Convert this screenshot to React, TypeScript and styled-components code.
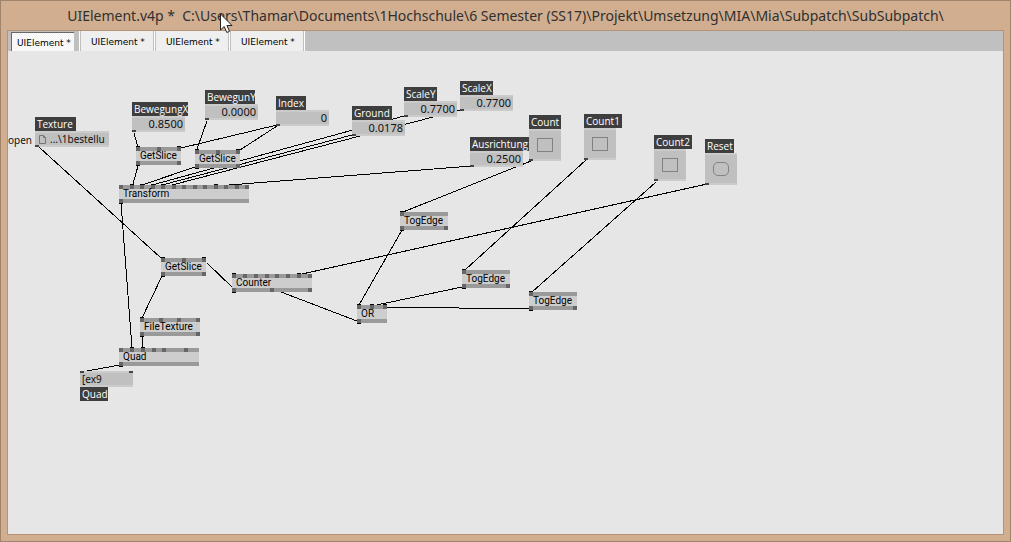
import React from "react";
import styled, { createGlobalStyle, css } from "styled-components";

const GlobalStyle = createGlobalStyle`
  *, *::before, *::after { box-sizing: border-box; }
  body { margin: 0; background: #d1ae8f; }
  button, input { font: inherit; color: inherit; margin: 0; padding: 0; border: 0; }
`;

const ioFont = `"Noto Sans", "Open Sans", sans-serif`;

const Window = styled.div`
  display: flex;
  flex-direction: column;
  min-height: 100vh;
  padding: 0 6px 6px;
  border: 1px solid #a0836b;
  background: #d1ae8f;
`;

const TitleBar = styled.h1`
  display: flex;
  align-items: center;
  justify-content: center;
  height: 29px;
  margin: 0;
  font: 400 14px/20px "Noto Sans", "Open Sans", sans-serif;
  color: #303030;
  white-space: pre;
`;

const Frame = styled.main`
  display: flex;
  flex: 1;
  flex-direction: column;
  border: 1px solid #b59377;
`;

const TabStrip = styled.nav`
  display: flex;
  height: 20px;
  padding-left: 3px;
  background: #c0c0c0;
`;

const Tab = styled.button<{ $active?: boolean }>`
  width: 72px;
  padding: 1px 0 0 10px;
  background: #efefef;
  font: 400 9px/20px "DejaVu Sans", sans-serif;
  color: #000;
  text-align: left;
  white-space: nowrap;

  ${(p) =>
    p.$active &&
    css`
      width: 63px;
      margin: 1px 4px 0 0;
      padding: 1px 0 0 5px;
      border-top: 1px solid #696969;
      border-left: 1px solid #696969;
      background: repeating-conic-gradient(#fff 0 25%, #f1f1f1 0 50%) 0 0 / 2px 2px;
      line-height: 18px;
    `}
`;

const TabDivider = styled.span`
  width: 3px;
  border: solid #c0c0c0;
  border-width: 0 1px;
  background: #fff;
`;

const Canvas = styled.section`
  position: relative;
  flex: 1;
  min-height: 400px;
  overflow: hidden;
  background: #e6e6e6;
`;

const Wires = styled.svg`
  position: absolute;
  inset: 0;
  width: 100%;
  height: 100%;
  fill: none;
  stroke: #000;
  shape-rendering: crispEdges;
`;

const Placed = styled.div<{ $x: number; $y: number; $w?: number }>`
  position: absolute;
  left: ${(p) => p.$x}px;
  top: ${(p) => p.$y}px;
  ${(p) => p.$w && `width: ${p.$w}px;`}
`;

const OperatorBox = styled(Placed)`
  background: #cdcdcd;
  font: 400 10px/10px "Roboto", "Liberation Sans", sans-serif;
  color: #000;
`;

const OperatorName = styled.div`
  height: 10px;
  padding-left: 4px;
  white-space: nowrap;
`;

const PinBar = styled.div`
  display: flex;
  justify-content: space-between;
  height: 4px;
  background: #9a9a9a;
`;

const Pin = styled.i<{ $kind: string; $out?: boolean }>`
  width: 4px;
  height: 4px;
  background: ${(p) => (p.$kind === "." ? "transparent" : "#666")};
  ${(p) => p.$kind === "x" && `box-shadow: 0 ${p.$out ? 1 : -1}px #000;`}
`;

const Caption = styled.label<{ $w: number }>`
  display: block;
  width: ${(p) => p.$w}px;
  height: 14px;
  padding-left: 2px;
  background: #3e3e3e;
  font: 500 10px/14px "Open Sans", "Noto Sans", sans-serif;
  color: #fff;
  white-space: nowrap;
`;

const IOBody = styled.div<{ $w: number }>`
  position: relative;
  display: flex;
  align-items: center;
  width: ${(p) => p.$w}px;
  height: 16px;
  border: solid #cbcbcb;
  border-width: 2px 0;
  background: #c0c0c0;
  font: 400 11px/12px ${ioFont};
  color: #111;
`;

const IOPin = styled.i<{ $top?: boolean; $right?: boolean }>`
  position: absolute;
  ${(p) => (p.$right ? "right: 0;" : "left: 0;")}
  ${(p) => (p.$top ? "top: -2px;" : "bottom: -2px;")}
  width: 4px;
  height: 2px;
  background: #444;
`;

const ValueInput = styled.input<{ $text?: boolean }>`
  flex: 1;
  min-width: 0;
  height: 12px;
  padding: 0 2px;
  background: transparent;
  line-height: 12px;
  text-align: right;

  ${(p) =>
    p.$text &&
    css`
      height: 14px;
      font-size: 10px;
      line-height: 14px;
      text-align: left;
    `}
`;

const FileIcon = styled.svg`
  flex: none;
  width: 8px;
  height: 9px;
  margin: 0 1px 0 4px;
  fill: none;
  stroke: #777;
`;

const PadBody = styled.div`
  position: relative;
  display: flex;
  align-items: center;
  justify-content: center;
  width: 32px;
  height: 32px;
  border: solid #cbcbcb;
  border-width: 2px 0;
  background: #c0c0c0;
`;

const padShape = css`
  display: block;
  width: 16px;
  height: 14px;
  border: 1px solid #828282;
  background: transparent;
`;

const ToggleBox = styled.input`
  ${padShape}
  appearance: none;
`;

const BangButton = styled.button`
  ${padShape}
  border-radius: 5px;
`;

const OpenText = styled(Placed)`
  font: 400 10px/14px ${ioFont};
  color: #111;
`;

const Cursor = styled.svg`
  position: absolute;
  left: 220px;
  top: 13px;
  width: 13px;
  height: 21px;
  pointer-events: none;
`;

/* Pins: "x" connected, "o" free, "." an empty slot. */
const operators = [
  { name: "GetSlice", x: 128, y: 96, w: 45, ins: "xox", outs: "xo" },
  { name: "GetSlice", x: 187, y: 99, w: 45, ins: "xox", outs: "xo" },
  { name: "Transform", x: 111, y: 134, w: 130, ins: "oxxxxxoooxooo", outs: "x" },
  { name: "TogEdge", x: 392, y: 161, w: 48, ins: "x", outs: "xo" },
  { name: "TogEdge", x: 454, y: 219, w: 48, ins: "x", outs: "xo" },
  { name: "TogEdge", x: 521, y: 241, w: 48, ins: "x", outs: "xo" },
  { name: "GetSlice", x: 153, y: 207, w: 45, ins: "xox", outs: "xo" },
  { name: "Counter", x: 224, y: 223, w: 80, ins: "xoooooxo", outs: "xoo" },
  { name: "OR", x: 349, y: 254, w: 30, ins: "xxx", outs: "x" },
  { name: "FileTexture", x: 132, y: 267, w: 60, ins: "xooo", outs: "xo" },
  { name: "Quad", x: 111, y: 297, w: 80, ins: "oxxoo.o.", outs: "x" },
];

const values = [
  { name: "BewegungX", x: 124, y: 51, label: 56, value: "0.8500" },
  { name: "BewegunY", x: 197, y: 39, label: 50, value: "0.0000" },
  { name: "Index", x: 268, y: 45, label: 30, value: "0" },
  { name: "Ground", x: 344, y: 55, label: 40, value: "0.0178" },
  { name: "ScaleY", x: 396, y: 36, label: 33, value: "0.7700" },
  { name: "ScaleX", x: 452, y: 30, label: 33, value: "0.7700" },
  { name: "Ausrichtung", x: 462, y: 86, label: 62, value: "0.2500" },
];

const pads = [
  { name: "Count", x: 521, y: 64, label: 32 },
  { name: "Count1", x: 576, y: 63, label: 38 },
  { name: "Count2", x: 646, y: 84, label: 38 },
  { name: "Reset", x: 697, y: 88, label: 29, bang: true },
];

const wires = [
  "M31 96L153 207",
  "M126 82L130 96",
  "M130 115L125 133",
  "M199 70L189 98",
  "M269 74L173 97",
  "M269 75L232 99",
  "M187 116L134 134",
  "M396 65L144 134",
  "M344 84L154 134",
  "M452 59L164 134",
  "M464 115L221 134",
  "M523 110L395 161",
  "M394 179L351 254",
  "M578 109L457 219",
  "M648 131L524 241",
  "M699 133L294 223",
  "M454 236L364 255",
  "M521 257L451 257L450 256L379 256",
  "M273 241L349 270",
  "M199 212L224 236",
  "M154 225L134 267",
  "M134 285L134 297",
  "M113 152L124 297",
  "M112 314L79 320",
];

function Pins({ pins, out }: { pins: string; out?: boolean }) {
  return (
    <PinBar>
      {pins.split("").map((kind, i) => (
        <Pin key={i} $kind={kind} $out={out} />
      ))}
    </PinBar>
  );
}

export default function App() {
  return (
    <>
      <GlobalStyle />
      <Window>
        <TitleBar>
          {"UIElement.v4p *  C:\\Users\\Thamar\\Documents\\1Hochschule\\6 Semester (SS17)\\Projekt\\Umsetzung\\MIA\\Mia\\Subpatch\\SubSubpatch\\"}
        </TitleBar>
        <Frame>
          <TabStrip>
            {[0, 1, 2, 3].map((i) => (
              <React.Fragment key={i}>
                <Tab type="button" $active={i === 0}>
                  UIElement *
                </Tab>
                <TabDivider />
              </React.Fragment>
            ))}
          </TabStrip>
          <Canvas>
            <Wires aria-hidden="true">
              {wires.map((d) => (
                <path key={d} d={d} />
              ))}
            </Wires>

            {operators.map((op) => (
              <OperatorBox key={`${op.x}-${op.y}`} $x={op.x} $y={op.y} $w={op.w}>
                <Pins pins={op.ins} />
                <OperatorName>{op.name}</OperatorName>
                <Pins pins={op.outs} out />
              </OperatorBox>
            ))}

            <OpenText $x={0} $y={82}>open</OpenText>
            <Placed $x={27} $y={66}>
              <Caption htmlFor="texture" $w={41}>Texture</Caption>
              <IOBody $w={74}>
                <FileIcon viewBox="0 0 8 9">
                  <path d="M.5.5h4l2 2v6h-6zM4.500.5v2h2" />
                </FileIcon>
                <ValueInput id="texture" $text defaultValue="...\1bestellu" />
                <IOPin />
              </IOBody>
            </Placed>

            {values.map((v) => (
              <Placed key={v.name} $x={v.x} $y={v.y}>
                <Caption htmlFor={v.name} $w={v.label}>{v.name}</Caption>
                <IOBody $w={53}>
                  <ValueInput id={v.name} defaultValue={v.value} />
                  <IOPin />
                </IOBody>
              </Placed>
            ))}

            {pads.map((p) => (
              <Placed key={p.name} $x={p.x} $y={p.y}>
                <Caption htmlFor={p.name} $w={p.label}>{p.name}</Caption>
                <PadBody>
                  {p.bang ? <BangButton id={p.name} type="button" /> : <ToggleBox id={p.name} type="checkbox" />}
                  <IOPin />
                </PadBody>
              </Placed>
            ))}

            <Placed $x={72} $y={320}>
              <IOBody $w={53}>
                <IOPin $top />
                <IOPin $top $right />
                <ValueInput id="quad" $text defaultValue="[ex9" />
              </IOBody>
              <Caption htmlFor="quad" $w={28}>Quad</Caption>
            </Placed>
          </Canvas>
        </Frame>
      </Window>
      <Cursor viewBox="0 0 13 21" aria-hidden="true">
        <path d="M.5 1v16l3.700-3.500 2.600 6 2.700-1.200-2.600-5.800h5.100z" fill="#fff" stroke="#222" />
      </Cursor>
    </>
  );
}
